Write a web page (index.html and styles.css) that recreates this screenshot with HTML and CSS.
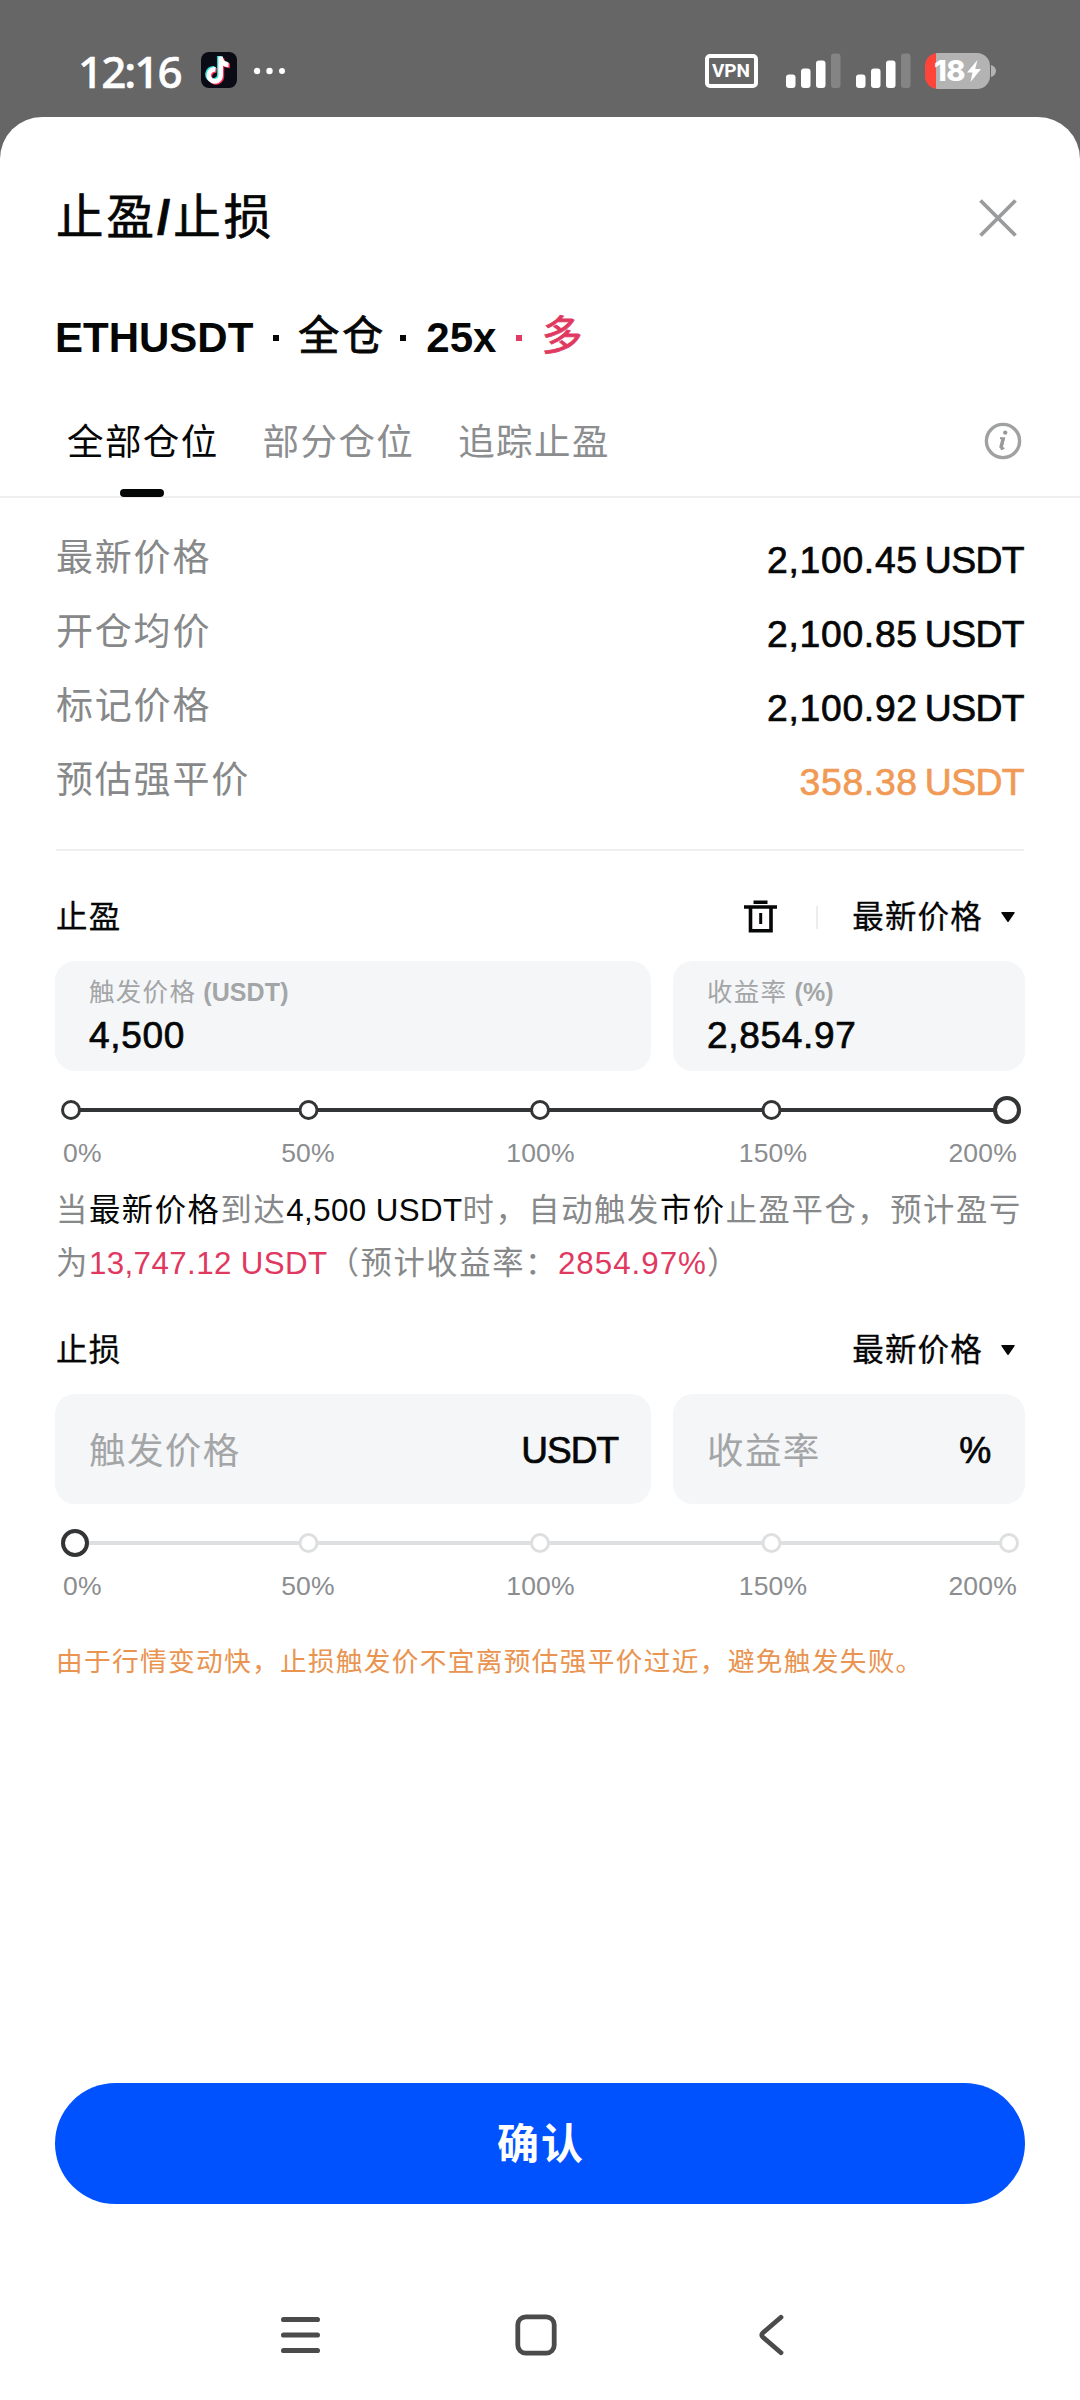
FILE: index.html
```html
<!DOCTYPE html>
<html lang="zh-CN">
<head>
<meta charset="utf-8">
<title>止盈/止损</title>
<link rel="stylesheet" href="styles.css">
</head>
<body>
<header class="status">
  <span class="clock">12:16</span>
  <svg class="app-icon" width="36" height="36" viewBox="0 0 36 36">
    <rect width="36" height="36" rx="8" fill="#0b0b16"/>
    <g fill="none" stroke-width="4.6">
      <path stroke="#2fe0dc" d="M18.4 4v18.4a6 6 0 1 1-5.2-6M18.4 5c.7 4 3.6 6.600 7.800 6.900"/>
      <path stroke="#fb2f57" d="M20.9 6v18.4a6 6 0 1 1-5.2-6M20.9 7c.7 4 3.8 6.600 8 6.900"/>
      <path stroke="#fff" d="M19.7 4.600v18.800a6 6 0 1 1-5.200-6M19.700 6c.7 4 3.600 6.600 7.800 6.900"/>
    </g>
  </svg>
  <svg class="more" width="32" height="8" viewBox="0 0 32 8" fill="#fff"><circle cx="4" cy="4" r="3.2"/><circle cx="16.5" cy="4" r="3.2"/><circle cx="29" cy="4" r="3"/></svg>
  <span class="vpn">VPN</span>
  <svg class="signal" width="55" height="35" viewBox="0 0 55 35" fill="#fff"><rect y="21.5" width="9.5" height="13.5" rx="3"/><rect x="15" y="15.5" width="9.5" height="19.5" rx="3"/><rect x="30" y="7.5" width="9.5" height="27.5" rx="3"/><rect x="45" y=".5" width="9.5" height="34.5" rx="3" opacity=".2"/></svg>
  <svg class="signal second" width="55" height="35" viewBox="0 0 55 35" fill="#fff"><rect y="21.5" width="9.5" height="13.5" rx="3"/><rect x="15" y="15.5" width="9.5" height="19.5" rx="3"/><rect x="30" y="7.5" width="9.5" height="27.5" rx="3"/><rect x="45" y=".5" width="9.5" height="34.5" rx="3" opacity=".2"/></svg>
  <span class="battery"><span class="charge">18</span>
    <svg width="14" height="22" viewBox="0 0 14 22" fill="#fff"><path d="M10.5 0 0 12.500h5.500L3.500 22 14 9H8.200z"/></svg>
  </span>
  <svg class="battery-cap" width="5" height="12" viewBox="0 0 5 12"><path d="M0 0c3.500 1 5 3.500 5 6s-1.500 5-5 6z" fill="#b3b3b3"/></svg>
</header>

<main class="sheet">
  <div class="title-row">
    <h1>止盈<span class="slash">/</span>止损</h1>
    <svg width="38" height="38" viewBox="0 0 38 38" stroke="#999b9d" stroke-width="3.8"><path d="M1.500 1.500 36.500 36.500M36.500 1.500 1.500 36.500"/></svg>
  </div>
  <div class="pair"><span>ETHUSDT</span><i class="dot"></i><b class="han">全仓</b><i class="dot"></i><span>25x</span><i class="dot red"></i><b class="han red">多</b></div>
  <nav class="tabs">
    <span class="tab active">全部仓位</span><span class="tab">部分仓位</span><span class="tab">追踪止盈</span>
    <svg class="info" width="38" height="38" viewBox="0 0 38 38"><circle cx="19" cy="19" r="16.6" fill="none" stroke="#a0a1a3" stroke-width="3.4"/><circle cx="21.2" cy="10.600" r="2.2" fill="#999"/><path d="M16 16.200h4l-2.600 9.600c-.4 1.800.9 1.800 2.800-.2" fill="none" stroke="#999" stroke-width="2"/><path d="M19.200 16.500 16.800 26" stroke="#999" stroke-width="3.4"/></svg>
  </nav>

  <div class="content">
    <dl class="prices">
      <div><dt>最新价格</dt><dd>2,100.45 <span class="unit">USDT</span></dd></div>
      <div><dt>开仓均价</dt><dd>2,100.85 <span class="unit">USDT</span></dd></div>
      <div><dt>标记价格</dt><dd>2,100.92 <span class="unit">USDT</span></dd></div>
      <div><dt>预估强平价</dt><dd class="orange">358.38 <span class="unit">USDT</span></dd></div>
    </dl>

    <section class="order profit">
      <div class="order-head">
        <h2>止盈</h2>
        <svg class="trash" width="33" height="34" viewBox="0 0 33 34" fill="none" stroke="#050606" stroke-width="3.6"><path d="M9.500 2.200h14M0 7h33M6.500 7v23.700h20.500V7"/><path d="M16.700 13v11" stroke-width="3"/></svg>
        <span class="bar"></span>
        <span class="select">最新价格</span>
        <svg width="14" height="11" viewBox="0 0 14 11"><path d="M.8 0h12.400q.8 0 .4.900L7.600 9.700q-.6.800-1.200 0L.4.900Q0 0 .8 0z" fill="#050606"/></svg>
      </div>
      <div class="fields">
        <div class="field"><label>触发价格<span> (USDT)</span></label><strong>4,500</strong></div>
        <div class="field"><label>收益率<span> (%)</span></label><strong>2,854.97</strong></div>
      </div>
      <svg class="slider" width="970" height="30" viewBox="0 0 970 30" fill="#fff" stroke="#333435" stroke-width="3"><path d="M16 15h936" stroke-width="4"/><circle cx="16" cy="15" r="8.5"/><circle cx="253.5" cy="15" r="8.5"/><circle cx="485" cy="15" r="8.5"/><circle cx="716.5" cy="15" r="8.5"/><circle cx="952" cy="15" r="12" stroke-width="4"/></svg>
      <div class="scale"><span>0%</span><span>50%</span><span>100%</span><span>150%</span><span>200%</span></div>
      <p class="summary"><span class="h">当<em>最新价格</em>到达</span><em class="num">4,500 USDT</em><span class="h">时，自动触发<em>市价</em>止盈平仓，预计盈亏</span><br><span class="h">为</span><span class="num red">13,747.12 USDT</span><span class="h">（预计收益率：</span><span class="rate red">2854.97%</span>）</p>
    </section>

    <section class="order loss">
      <div class="order-head">
        <h2>止损</h2>
        <span class="select">最新价格</span>
        <svg width="14" height="11" viewBox="0 0 14 11"><path d="M.8 0h12.400q.8 0 .4.900L7.600 9.700q-.6.800-1.200 0L.4.900Q0 0 .8 0z" fill="#050606"/></svg>
      </div>
      <div class="fields">
        <div class="field empty"><span class="hint">触发价格</span><strong class="unit">USDT</strong></div>
        <div class="field empty"><span class="hint">收益率</span><strong class="percent">%</strong></div>
      </div>
      <svg class="slider" width="970" height="30" viewBox="0 0 970 30" fill="#fff" stroke="#dedfe0" stroke-width="3"><path d="M20 15h934" stroke-width="4"/><circle cx="20" cy="15" r="12" stroke="#333435" stroke-width="4"/><circle cx="253.5" cy="15" r="8.5"/><circle cx="485" cy="15" r="8.5"/><circle cx="716.5" cy="15" r="8.5"/><circle cx="954" cy="15" r="8.5"/></svg>
      <div class="scale"><span>0%</span><span>50%</span><span>100%</span><span>150%</span><span>200%</span></div>
      <p class="warning">由于行情变动快，止损触发价不宜离预估强平价过近，避免触发失败。</p>
    </section>
  </div>

  <button class="confirm">确认</button>
  <footer class="system-nav">
    <svg width="39" height="42" viewBox="0 0 39 42" stroke="#4b4b4b" stroke-width="5.2" stroke-linecap="round"><path d="M2.600 5.500h33.800M2.600 21h33.800M2.600 36.500h33.800"/></svg>
    <svg class="home" width="42" height="42" viewBox="0 0 42 42"><rect x="2.8" y="2.8" width="36.4" height="36.4" rx="8" fill="none" stroke="#4b4b4b" stroke-width="4.8"/></svg>
    <svg width="26" height="42" viewBox="0 0 26 42"><path d="M23 3.200 5 18.700q-2.500 2.300 0 4.600l18 15.500" fill="none" stroke="#4b4b4b" stroke-width="4.8" stroke-linecap="round"/></svg>
  </footer>
</main>
</body>
</html>
```
FILE: styles.css
```css
* { box-sizing: border-box; }
body {
  margin: 0;
  width: 1080px;
  height: 2400px;
  background: #666;
  color: #050606;
  font-family: "Liberation Sans", "Noto Sans CJK SC", sans-serif;
  display: flex;
  flex-direction: column;
  overflow: hidden;
}
h1, h2, p, dl, dd { margin: 0; font-weight: 400; }
svg { display: block; flex: none; }
em, i { font-style: normal; }

.status {
  height: 117px;
  padding: 24px 84px 0 78px;
  display: flex;
  align-items: center;
  color: #fff;
}
.clock { width: 123px; font: 500 44px/50px "Noto Sans", sans-serif; letter-spacing: -2px; white-space: nowrap; -webkit-text-stroke: .5px #fff; }
.app-icon { margin-top: -1px; }
.more { margin-left: 16px; }
.vpn {
  width: 53px;
  height: 34px;
  margin: 0 28.5px 0 auto;
  border: 4px solid #fff;
  border-radius: 5px;
  font: 700 19px/26px Roboto, sans-serif;
  text-align: center;
}
.second { margin: 0 14px 0 15px; }
.battery {
  width: 65px;
  height: 36px;
  border-radius: 13px;
  background: linear-gradient(90deg, #ff453a 11px, #b3b3b3 11px);
  display: flex;
  align-items: center;
  justify-content: center;
  gap: 2px;
}
.charge { font: 800 29px/36px Inter, sans-serif; letter-spacing: -.5px; }
.battery-cap { margin-left: 1px; }

.sheet {
  flex: 1;
  background: #fff;
  border-radius: 42px 42px 0 0;
  display: flex;
  flex-direction: column;
}
.title-row {
  height: 141px;
  padding: 60px 63px 0 56px;
  display: flex;
  justify-content: space-between;
  align-items: center;
}
h1 { font-size: 47.5px; line-height: 60px; letter-spacing: 3px; -webkit-text-stroke: .7px #050606; }
.slash { font-weight: 700; }
.pair {
  height: 130px;
  padding: 29px 55px 0;
  display: flex;
  align-items: center;
  font-size: 42px;
  font-weight: 700;
  line-height: 60px;
}
.pair .han { font-size: 41px; letter-spacing: 3px; font-weight: 400; margin: -3px -6px 0 -1px; -webkit-text-stroke: .8px currentColor; }
.dot { width: 6px; height: 6px; background: #050606; margin: 0 20px; }
.dot.red { background: #e23b63; }
.red { color: #e0385f; }
.tabs {
  height: 110px;
  padding: 0 58px 0 67px;
  border-bottom: 2px solid #efeff0;
  display: flex;
  align-items: flex-start;
  gap: 44px;
}
.tab {
  display: flex;
  flex-direction: column;
  align-items: center;
  height: 109px;
  padding-top: 27px;
  font-size: 36.5px;
  line-height: 56px;
  letter-spacing: 1.4px;
  color: #8b8d8f;
}
.tab.active { color: #050606; }
.tab.active::after { content: ""; width: 44px; height: 8px; border-radius: 4px; background: #050606; margin: 18px 2px 0 0; }
.info { margin: 34px 0 0 auto; }

.content { padding: 0 56px; }
.prices { height: 353px; padding-top: 24px; border-bottom: 2px solid #efeff0; }
.prices div { height: 74px; display: flex; justify-content: space-between; align-items: center; }
dt { font-size: 37px; line-height: 74px; letter-spacing: 1.8px; color: #868889; }
dd { font-size: 37.3px; margin-top: 2px; letter-spacing: .7px; word-spacing: -4px; -webkit-text-stroke: .7px currentColor; }
.unit { letter-spacing: -.6px; }
.orange { color: #f09a55; }

.order-head { height: 36px; display: flex; align-items: center; padding-right: 9px; }
h2, .select { font-size: 31.5px; line-height: 36px; letter-spacing: 1.2px; -webkit-text-stroke: .3px #050606; }
h2 { margin-right: auto; }
.profit { padding-top: 48px; }
.trash { margin-right: 39px; }
.bar { width: 2px; height: 23px; background: #ededee; margin-right: 34px; }
.select { margin-right: 18px; }
.fields { display: grid; grid-template-columns: 596px 352px; gap: 22px; margin: 26px -1px 0; }
.field {
  height: 110px;
  border-radius: 20px;
  background: #f4f6f8;
  padding: 12px 34px 0;
  display: flex;
  flex-direction: column;
}
.field label { font-size: 25.5px; line-height: 38px; letter-spacing: 1.3px; color: #a3a5a7; }
.field label span { font-weight: 700; letter-spacing: .1px; font-size: 25px; }
.field strong { font-size: 37px; line-height: 46px; margin-top: 2px; font-weight: 400; letter-spacing: .7px; -webkit-text-stroke: .7px #050606; }
.field.empty { flex-direction: row; justify-content: space-between; align-items: center; padding-top: 0; }
.field.empty strong { margin: 4px -1px 0 0; }
.field .unit { letter-spacing: -1px; }
.field .percent { font-size: 36px; }
.hint { font-size: 36.5px; letter-spacing: 1.4px; color: #a3a5a7; margin-top: -2px; }
.slider { margin: 24px 0 0 -1px; }
.scale {
  display: grid;
  grid-template-columns: 129px 232px 233px 232px 128px;
  margin: 13px 0 0 7px;
  font-size: 26.5px;
  line-height: 30px;
  letter-spacing: .2px;
  text-align: center;
  color: #8b8d8f;
}
.scale span:first-child { text-align: left; }
.scale span:last-child { text-align: right; }
.summary { margin-top: 17px; font-size: 31.3px; line-height: 52.5px; color: #868889; white-space: nowrap; }
.summary em { color: #050606; }
.h { letter-spacing: 1.6px; }
.num { letter-spacing: .4px; }
.rate { letter-spacing: 1px; }
.loss { padding-top: 42px; }
.warning { margin-top: 43px; font-size: 26.7px; line-height: 36px; letter-spacing: 1.3px; color: #e99450; white-space: nowrap; }

.confirm {
  margin: auto 55px 0;
  height: 121px;
  border: 0;
  border-radius: 61px;
  background: #0052ff;
  color: #fff;
  font-family: inherit;
  font-size: 42px;
  font-weight: 700;
  letter-spacing: 2px;
  padding: 0 0 6px 2px;
}
.system-nav {
  height: 196px;
  padding: 110px 0 0 281px;
  display: flex;
}
.home { margin: 0 201px 0 195px; }
```
